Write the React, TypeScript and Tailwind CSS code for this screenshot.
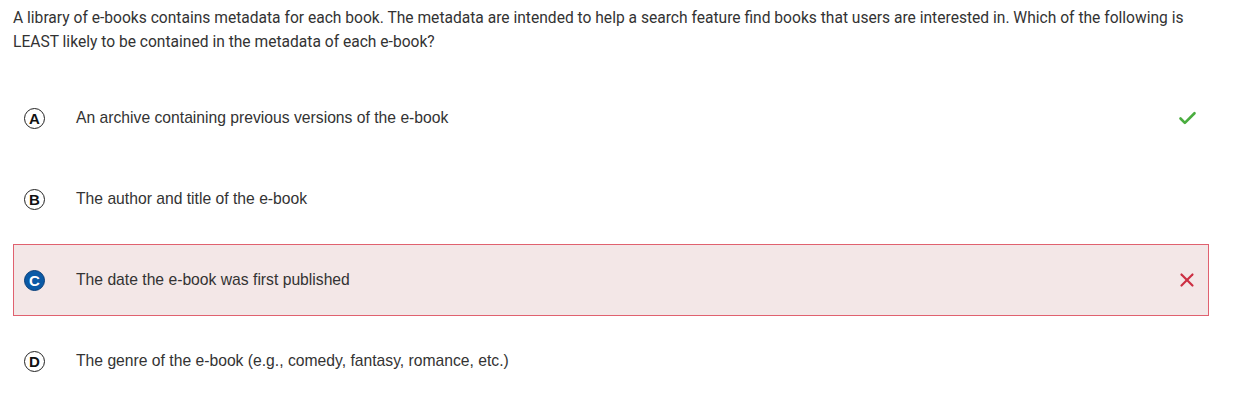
import { Check, X } from "lucide-react";

type Choice = {
  letter: string;
  text: string;
  state?: "correct" | "wrong";
};

const choices: Choice[] = [
  { letter: "A", text: "An archive containing previous versions of the e-book", state: "correct" },
  { letter: "B", text: "The author and title of the e-book" },
  { letter: "C", text: "The date the e-book was first published", state: "wrong" },
  { letter: "D", text: "The genre of the e-book (e.g., comedy, fantasy, romance, etc.)" },
];

export default function App() {
  return (
    <div className="w-[1246px] h-[406px] bg-white px-[13px] pt-[6px]">
      <div className="w-[1196px]">
        <p className="font-['Roboto',sans-serif] text-[15.6px] leading-6 text-[#333333]">
          A library of e-books contains metadata for each book. The metadata are intended to help a search
          feature find books that users are interested in. Which of the following is LEAST likely to be
          contained in the metadata of each e-book?
        </p>

        <div className="mt-[28px] flex flex-col gap-[9px]">
          {choices.map((c) => {
            const wrong = c.state === "wrong";
            return (
              <div
                key={c.letter}
                className={
                  wrong
                    ? "h-[72px] flex items-center border border-[#e0616f] bg-[#f3e7e7] pl-[10px] pr-[10px]"
                    : "h-[72px] flex items-center border border-transparent pl-[10px] pr-[10px]"
                }
              >
                {wrong ? (
                  <span className="w-[21px] h-[21px] rounded-full bg-[#0a5aa6] border-[1.5px] border-[#0a3f78] flex items-center justify-center text-white font-['Liberation_Sans',sans-serif] font-bold text-[15px] leading-none">
                    {c.letter}
                  </span>
                ) : (
                  <span className="w-[21px] h-[21px] rounded-full border-[1.5px] border-[#222222] flex items-center justify-center text-[#111111] font-['Liberation_Sans',sans-serif] font-bold text-[15px] leading-none">
                    {c.letter}
                  </span>
                )}
                <span className="ml-[31px] flex-1 font-['Liberation_Sans',sans-serif] text-[15.7px] text-[#333333]">
                  {c.text}
                </span>
                {c.state === "correct" && <Check className="w-[21px] h-[21px] text-[#4aad3f]" strokeWidth={3} />}
                {wrong && <X className="w-[22px] h-[22px] text-[#cc2f43]" strokeWidth={2.4} />}
              </div>
            );
          })}
        </div>
      </div>
    </div>
  );
}
